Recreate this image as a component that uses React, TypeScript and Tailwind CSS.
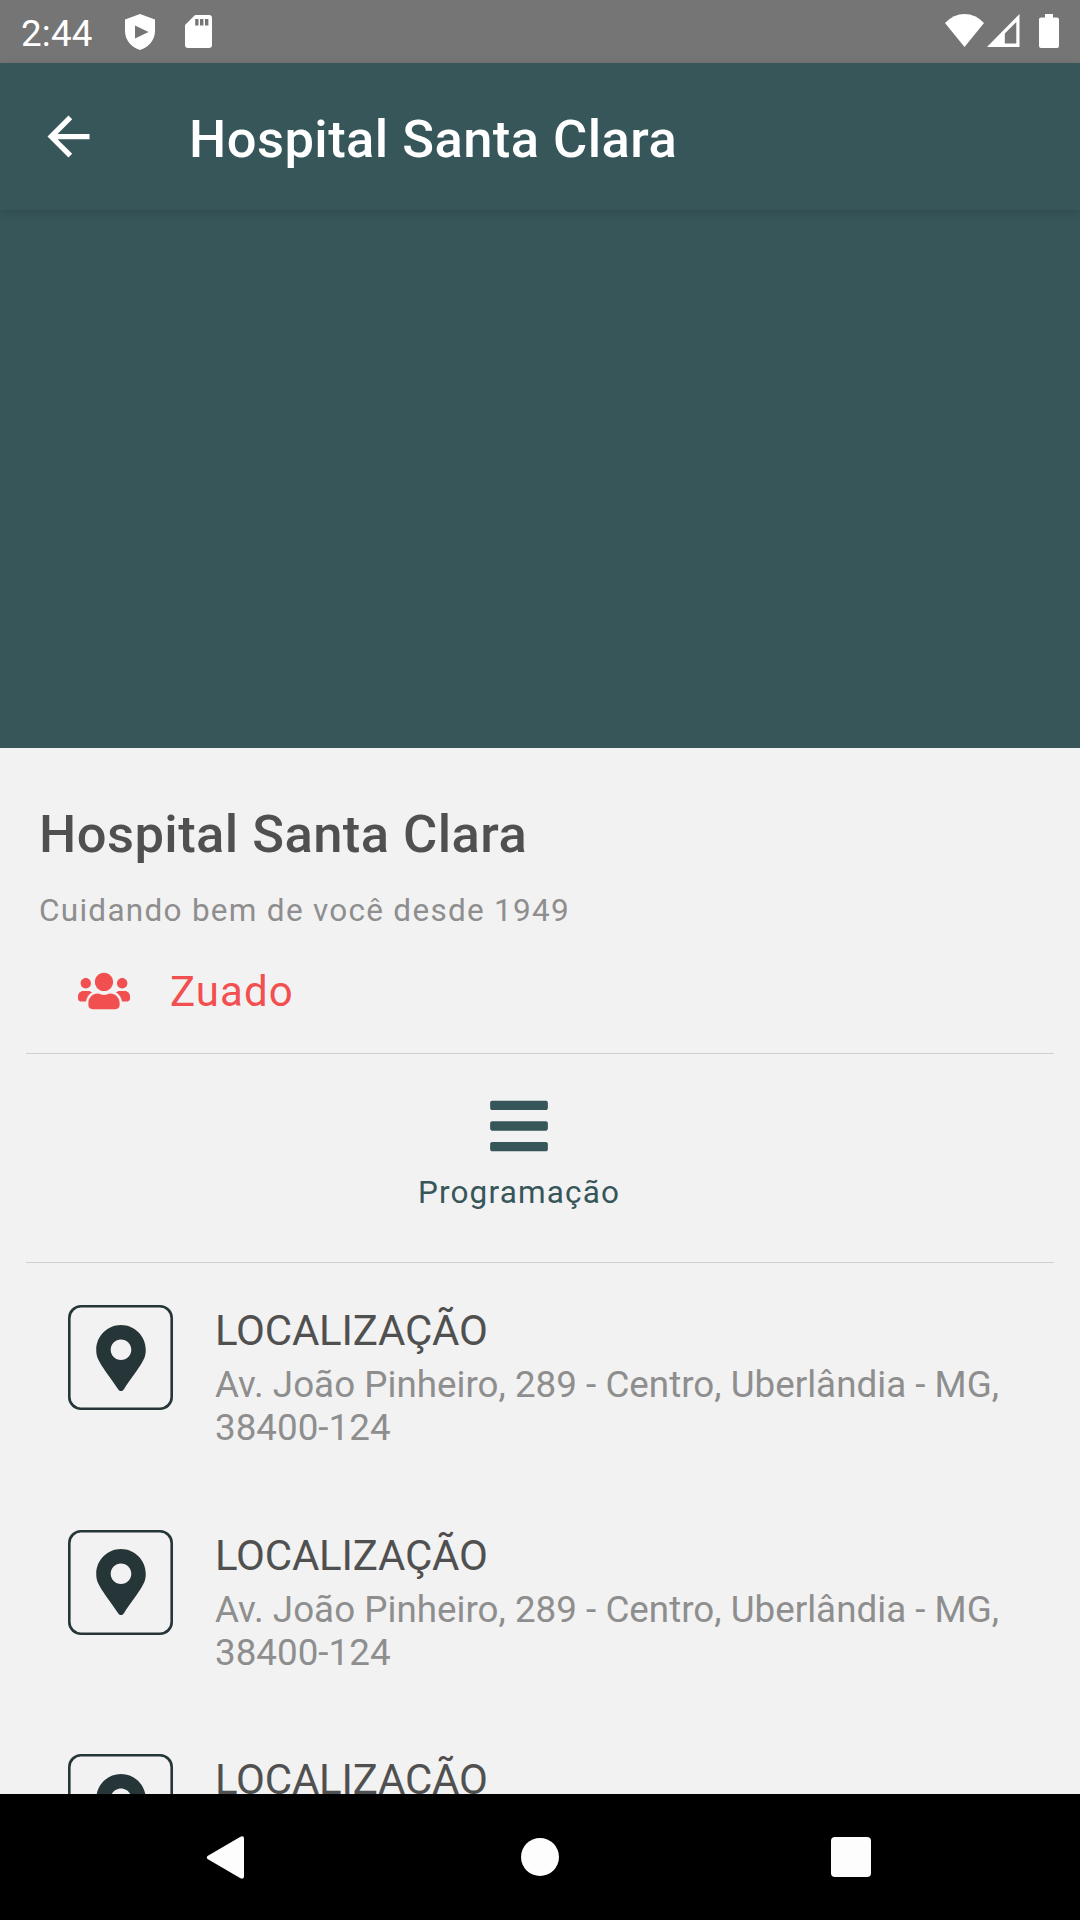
import { FaBars, FaMapMarkerAlt, FaUsers } from "react-icons/fa";
import { MdArrowBack } from "react-icons/md";

type Location = {
  id: number;
  title: string;
  address: string;
};

const locations: Location[] = [1, 2, 3].map((id) => ({
  id,
  title: "LOCALIZAÇÃO",
  address: "Av. João Pinheiro, 289 - Centro, Uberlândia - MG, 38400-124",
}));

const StatusBar = () => (
  <div className="flex h-[63px] shrink-0 items-start bg-[#757575] text-white">
    <span className="ml-[21px] mt-[12px] w-[104px] text-[36.75px] leading-[43px] tracking-[0.2px]">2:44</span>
    <svg className="mt-[14px] h-9 w-[30px]" viewBox="0 0 30 36" fill="currentColor">
      <path
        fillRule="evenodd"
        d="M15 0L30 5.5V17C30 26 23.5 33.5 15 36C6.5 33.5 0 26 0 17V5.5ZM10 11.5V24.5L23.5 18Z"
      />
    </svg>
    <svg className="ml-[29.5px] mt-[15px] h-[33px] w-[27px]" viewBox="0 0 27 33" fill="currentColor">
      <path
        fillRule="evenodd"
        d="M10 0H24Q27 0 27 3V30Q27 33 24 33H3Q0 33 0 30V10ZM10.2 4V10.5H13.5V4ZM15 4V10.5H18.4V4ZM20 4V10.5H23.4V4Z"
      />
    </svg>
    <div className="ml-auto mr-[21px] mt-[14px] flex">
      <svg className="h-[33px] w-[39px]" viewBox="0 0 39 33" fill="currentColor">
        <path d="M0 9Q8.5 0 19.5 0T39 9L19.5 33Z" />
      </svg>
      <svg className="ml-[3px] h-[33px] w-[33px]" viewBox="0 0 33 33" fill="currentColor">
        <path fillRule="evenodd" d="M0 33L32.5 0V33ZM17.8 19.5V29.5H29.3V8Z" />
      </svg>
      <svg className="ml-[19px] h-[34px] w-5" viewBox="0 0 20 34" fill="currentColor">
        <path d="M6 0H14V3.5H18Q20 3.5 20 5.5V32Q20 34 18 34H2Q0 34 0 32V5.5Q0 3.5 2 3.5H6Z" />
      </svg>
    </div>
  </div>
);

const Header = () => (
  <header className="relative flex h-[147px] shrink-0 items-center bg-[#37565a] pl-[37px] text-white shadow-[0_3px_9px_rgba(0,0,0,0.12)]">
    <MdArrowBack className="size-[63px]" />
    <h1 className="ml-[89px] mt-[4px] text-[52.5px] font-medium leading-[62px] tracking-[0.45px]">
      Hospital Santa Clara
    </h1>
  </header>
);

const LocationItem = ({ title, address }: Location) => (
  <div className="flex h-[224.5px] shrink-0 pl-[68px]">
    <div className="flex size-[105px] items-center justify-center rounded-[13px] shadow-[inset_0_0_0_2.6px_#263538]">
      <FaMapMarkerAlt className="h-[66px] w-[50px] text-[#263538]" />
    </div>
    <div className="ml-[42px] mt-px w-[800px]">
      <h3 className="text-[42px] leading-[49px] tracking-[-0.2px] text-[#505050]">{title}</h3>
      <p className="mt-2 text-[36.75px] leading-[43px] tracking-[0.02px] text-[#8e8e8e]">{address}</p>
    </div>
  </div>
);

const NavigationBar = () => (
  <nav className="flex h-[126px] shrink-0 items-center bg-black text-[#fdfdfd]">
    <svg className="ml-[206px] h-[43px] w-[38px]" viewBox="0 0 38 43" fill="currentColor">
      <path d="M1.5 20L34.5 .8Q38 -.6 38 2.5V40.5Q38 43.6 34.5 42.2L1.5 23Q0 21.5 1.5 20Z" />
    </svg>
    <div className="ml-[277px] size-[38px] rounded-full bg-[#fdfdfd]" />
    <div className="ml-[272px] size-10 rounded-[4px] bg-[#fdfdfd]" />
  </nav>
);

export default function App() {
  return (
    <div className="flex h-[1920px] w-[1080px] flex-col overflow-hidden bg-[#f2f2f2] font-['Roboto',sans-serif]">
      <StatusBar />
      <Header />
      <div className="h-[538px] shrink-0 bg-[#37565a]" />

      <main className="min-h-0 flex-1 overflow-hidden">
        <section className="mx-[26px] h-[306px] border-b border-[#cfcfcf] pl-[13px] pt-[55px]">
          <h2 className="text-[52.5px] font-medium leading-[62px] tracking-[0.45px] text-[#505050]">
            Hospital Santa Clara
          </h2>
          <p className="mt-[27px] text-[31.5px] leading-[37px] tracking-[1.28px] text-[#8e8e8e]">
            Cuidando bem de você desde 1949
          </p>
          <div className="mt-[38px] flex h-[49px] items-start pl-[39px] text-[#f25050]">
            <FaUsers className="mt-[2.5px] h-[42px] w-[52px]" />
            <span className="ml-10 text-[42px] leading-[49px] tracking-[1.05px]">Zuado</span>
          </div>
        </section>

        <section className="mx-[26px] flex h-[209px] flex-col items-center border-b border-[#cfcfcf] pr-[42px] pt-[38.5px] text-[#37565a]">
          <FaBars className="h-[66px] w-[58px]" />
          <span className="mt-[15.5px] text-[31.5px] leading-[37px] tracking-[1.15px]">Programação</span>
        </section>

        <div className="flex flex-col pt-[42px]">
          {locations.map((location) => (
            <LocationItem key={location.id} {...location} />
          ))}
        </div>
      </main>

      <NavigationBar />
    </div>
  );
}
